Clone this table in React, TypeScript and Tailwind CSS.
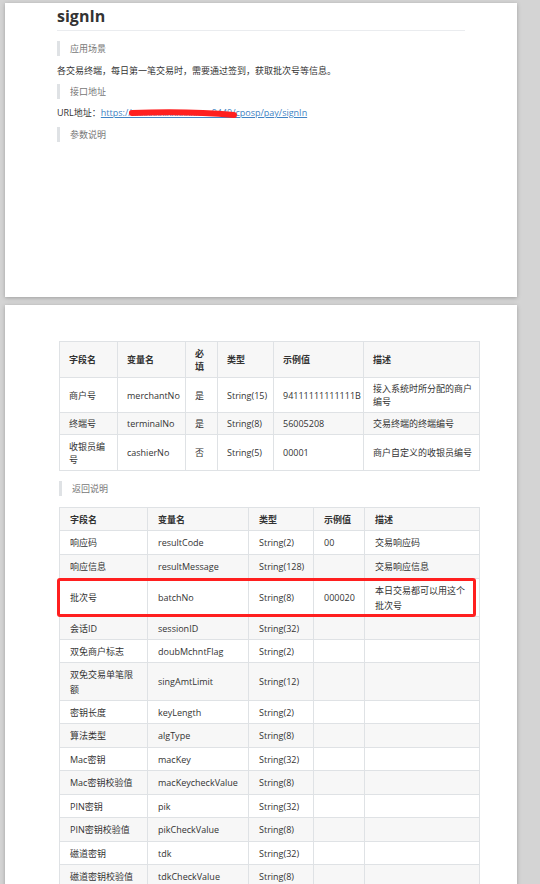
import React from 'react';

const font = { fontFamily: '"Open Sans", "Noto Sans CJK SC", sans-serif' };

type Row = { cells: React.ReactNode[]; h: string };

const Quote: React.FC<{ text: string; className?: string }> = ({ text, className = '' }) => (
    <div className={`flex items-center h-[15px] border-l-[3px] border-[#dfe2e5] pl-[10px] text-[9px] text-[#777] ${className}`}>{text}</div>
);

const Table: React.FC<{ widths: number[]; head: React.ReactNode[]; rows: Row[]; headH: string; pad: string; leading: string }> = ({ widths, head, rows, headH, pad, leading }) => (
    <table className={`w-[420px] table-fixed border-collapse text-[9px] text-[#333] ${leading}`}>
        <colgroup>
            {widths.map((w, i) => <col key={i} style={{ width: w }} />)}
        </colgroup>
        <thead>
            <tr className={`bg-[#f7f7f7] ${headH}`}>
                {head.map((c, i) => (
                    <th key={i} className={`border border-[#dfe2e5] ${pad} text-left font-semibold align-middle`}>{c}</th>
                ))}
            </tr>
        </thead>
        <tbody>
            {rows.map((r, i) => (
                <tr key={i} className={`${r.h} ${i % 2 === 1 ? 'bg-[#f7f7f7]' : 'bg-white'}`}>
                    {r.cells.map((c, j) => (
                        <td key={j} className={`border border-[#dfe2e5] ${pad} align-middle whitespace-nowrap`}>{c}</td>
                    ))}
                </tr>
            ))}
        </tbody>
    </table>
);

const params: Row[] = [
    { h: 'h-[35px]', cells: ['商户号', 'merchantNo', '是', 'String(15)', '94111111111111B', <>接入系统时所分配的商户<br />编号</>] },
    { h: 'h-[22px]', cells: ['终端号', 'terminalNo', '是', 'String(8)', '56005208', '交易终端的终端编号'] },
    { h: 'h-[36px]', cells: [<>收银员编<br />号</>, 'cashierNo', '否', 'String(5)', '00001', '商户自定义的收银员编号'] },
];

const r2 = (a: React.ReactNode, b: string, c: string, d = '', e: React.ReactNode = '', h = 'h-[23px]'): Row => ({ h, cells: [a, b, c, d, e] });

const returns: Row[] = [
    r2('响应码', 'resultCode', 'String(2)', '00', '交易响应码', 'h-[24px]'),
    r2('响应信息', 'resultMessage', 'String(128)', '', '交易响应信息', 'h-[24px]'),
    r2('批次号', 'batchNo', 'String(8)', '000020', <>本日交易都可以用这个<br />批次号</>, 'h-[38px]'),
    r2('会话ID', 'sessionID', 'String(32)'),
    r2('双免商户标志', 'doubMchntFlag', 'String(2)'),
    r2(<>双免交易单笔限<br />额</>, 'singAmtLimit', 'String(12)', '', '', 'h-[38px]'),
    r2('密钥长度', 'keyLength', 'String(2)'),
    r2('算法类型', 'algType', 'String(8)', '', '', 'h-[24px]'),
    r2('Mac密钥', 'macKey', 'String(32)'),
    r2('Mac密钥校验值', 'macKeycheckValue', 'String(8)', '', '', 'h-[24px]'),
    r2('PIN密钥', 'pik', 'String(32)'),
    r2('PIN密钥校验值', 'pikCheckValue', 'String(8)', '', '', 'h-[24px]'),
    r2('磁道密钥', 'tdk', 'String(32)'),
    r2('磁道密钥校验值', 'tdkCheckValue', 'String(8)', '', '', 'h-[24px]'),
];

export default function App() {
    return (
        <div className="h-[884px] w-[540px] overflow-hidden bg-[#d4d4d4] pt-[3px] pl-[5px]" style={font}>
            {/* page 1 */}
            <div className="w-[512px] h-[294px] bg-white shadow-[0_1px_4px_rgba(0,0,0,0.25)] px-[52px]">
                <div className="pt-[2px] pb-[3px] border-b border-[#eaecef] w-[408px]">
                    <h1 className="text-[16px] leading-[22px] font-bold text-[#333]">signIn</h1>
                </div>
                <Quote text="应用场景" className="mt-[10px]" />
                <p className="mt-[8px] h-[14px] leading-[14px] text-[9px] text-[#333]">各交易终端，每日第一笔交易时，需要通过签到，获取批次号等信息。</p>
                <Quote text="接口地址" className="mt-[6px]" />
                <div className="mt-[7px] h-[14px] leading-[14px] text-[9px] text-[#333] flex">
                    <span>URL地址：</span>
                    <span className="relative">
                        <a className="text-[#4183c4] underline">https://xxxxxxx.xxxxxxxxx:9449/cposp/pay/signIn</a>
                        <svg className="absolute left-[28px] top-[3px]" width="108" height="10" viewBox="0 0 108 10">
                            <path d="M3 4 C30 3 72 3 105 6" stroke="#ff1f1f" strokeWidth="6" strokeLinecap="round" fill="none" />
                        </svg>
                    </span>
                </div>
                <Quote text="参数说明" className="mt-[7px]" />
            </div>

            {/* page 2 */}
            <div className="mt-[8px] w-[512px] h-[600px] bg-white shadow-[0_1px_4px_rgba(0,0,0,0.25)] pt-[36px] px-[54px]">
                <Table
                    widths={[58, 68, 32, 56, 90, 116]}
                    head={['字段名', '变量名', <>必<br />填</>, '类型', '示例值', '描述']}
                    rows={params}
                    headH="h-[36px]"
                    pad="pl-[9px] pr-[2px]"
                    leading="leading-[13px]"
                />
                <Quote text="返回说明" className="mt-[10px]" />
                <div className="relative mt-[11px]">
                    <Table
                        widths={[88, 101, 65, 51, 115]}
                        head={['字段名', '变量名', '类型', '示例值', '描述']}
                        rows={returns}
                        headH="h-[23px]"
                        pad="pl-[10px] pr-[2px]"
                        leading="leading-[15px]"
                    />
                    <div className="absolute left-[-2px] top-[71px] w-[419px] h-[39px] border-[3px] border-[#ff1f1f] rounded-[3px]" />
                </div>
            </div>
        </div>
    );
}
